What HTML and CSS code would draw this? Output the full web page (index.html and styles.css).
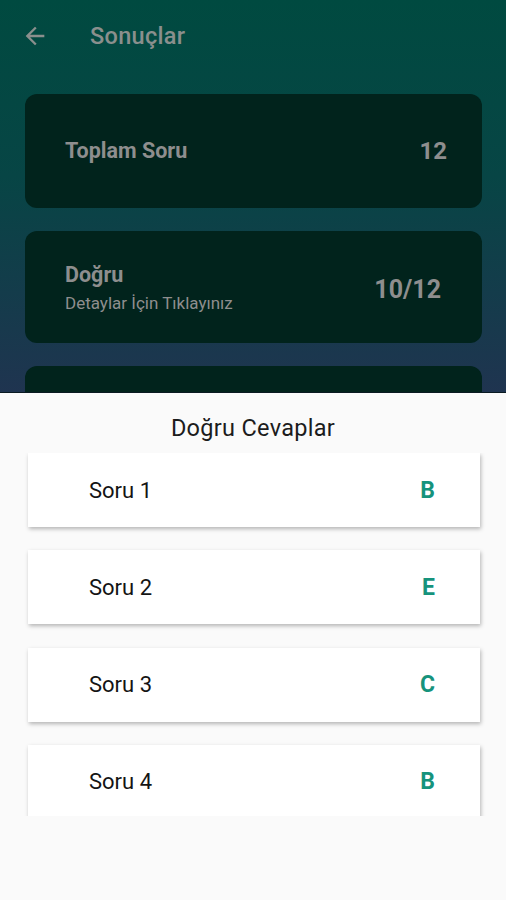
FILE: index.html
```html
<!DOCTYPE html>
<html lang="tr">
<head>
  <meta charset="UTF-8" />
  <meta name="viewport" content="width=device-width, initial-scale=1" />
  <title>Sonuçlar</title>
  <link rel="stylesheet" href="styles.css">
</head>
<body>
  <div class="screen">
    <div class="backdrop">
      <header class="topbar">
        <svg class="back-icon" viewBox="0 0 24 24" width="28" height="28">
          <path d="M20 11H7.83l5.59-5.59L12 4l-8 8 8 8 1.41-1.41L7.83 13H20v-2z" fill="currentColor"/>
        </svg>
        <h1>Sonuçlar</h1>
      </header>

      <div class="stats">
        <div class="stat-card tall">
          <div class="stat-label">Toplam Soru</div>
          <div class="stat-value">12</div>
        </div>
        <div class="stat-card">
          <div>
            <div class="stat-label">Doğru</div>
            <div class="stat-hint">Detaylar İçin Tıklayınız</div>
          </div>
          <div class="stat-value wide">10/12</div>
        </div>
        <div class="stat-card"></div>
      </div>
    </div>

    <div class="sheet">
      <h2 class="sheet-title">Doğru Cevaplar</h2>
      <div class="answers">
        <div class="answer"><span class="answer-name">Soru 1</span><span class="answer-key">B</span></div>
        <div class="answer"><span class="answer-name">Soru 2</span><span class="answer-key">E</span></div>
        <div class="answer"><span class="answer-name">Soru 3</span><span class="answer-key">C</span></div>
        <div class="answer"><span class="answer-name">Soru 4</span><span class="answer-key">B</span></div>
      </div>
    </div>
  </div>
</body>
</html>
```

FILE: styles.css
```css
body {
  margin: 0;
  font-family: Roboto, "Noto Sans", sans-serif;
  background: #fafafa;
}

.screen {
  width: 506px;
  height: 900px;
  display: flex;
  flex-direction: column;
  overflow: hidden;
}

/* ecran arriere, assombri par le voile */
.backdrop {
  height: 392px;
  flex-shrink: 0;
  overflow: hidden;
  background: linear-gradient(to bottom, #004a40 0%, #074545 45%, #1f3450 100%);
  border-bottom: 1px solid #0a1a22;
}

.topbar {
  height: 72px;
  display: flex;
  align-items: center;
  padding-left: 21px;
  color: #8a8f8d;
}
.back-icon {
  display: block;
}
.topbar h1 {
  margin: 0 0 0 41px;
  font-size: 23.5px;
  font-weight: 500;
  color: #8a8f8d;
  letter-spacing: 0.3px;
}

.stats {
  display: flex;
  flex-direction: column;
  gap: 23px;
  padding: 22px 24px 0 25px;
}
.stat-card {
  height: 112px;
  flex-shrink: 0;
  background: #01231c;
  border-radius: 12px;
  display: flex;
  align-items: center;
  justify-content: space-between;
  padding: 0 35px 0 40px;
  color: #8e8e8e;
}
.stat-card.tall {
  height: 114px;
}
.stat-label {
  font-size: 21.5px;
  font-weight: 700;
  line-height: 26px;
}
.stat-hint {
  font-size: 17px;
  line-height: 20px;
  margin-top: 5px;
}
.stat-value {
  font-size: 24px;
  font-weight: 700;
}
.stat-value.wide {
  font-size: 25px;
  margin-right: 6px;
  margin-top: 4px;
}

/* feuille du bas */
.sheet {
  flex: 1;
  background: #fafafa;
}
.sheet-title {
  margin: 0;
  padding-top: 21px;
  height: 39px;
  line-height: 28px;
  text-align: center;
  font-size: 23.5px;
  font-weight: 400;
  color: #1c1c1c;
  letter-spacing: 0.3px;
}
.answers {
  height: 363px;
  overflow: hidden;
  display: flex;
  flex-direction: column;
  gap: 23.3px;
  padding: 0 26px 0 28px;
}
.answer {
  height: 74px;
  flex-shrink: 0;
  background: #fff;
  display: flex;
  align-items: center;
  justify-content: space-between;
  padding: 0 45px 0 61px;
  box-shadow: 1px 2px 4px rgba(0, 0, 0, 0.28);
}
.answer-name {
  font-size: 22px;
  color: #141414;
}
.answer-key {
  font-size: 23px;
  font-weight: 700;
  color: #16937c;
}
```
